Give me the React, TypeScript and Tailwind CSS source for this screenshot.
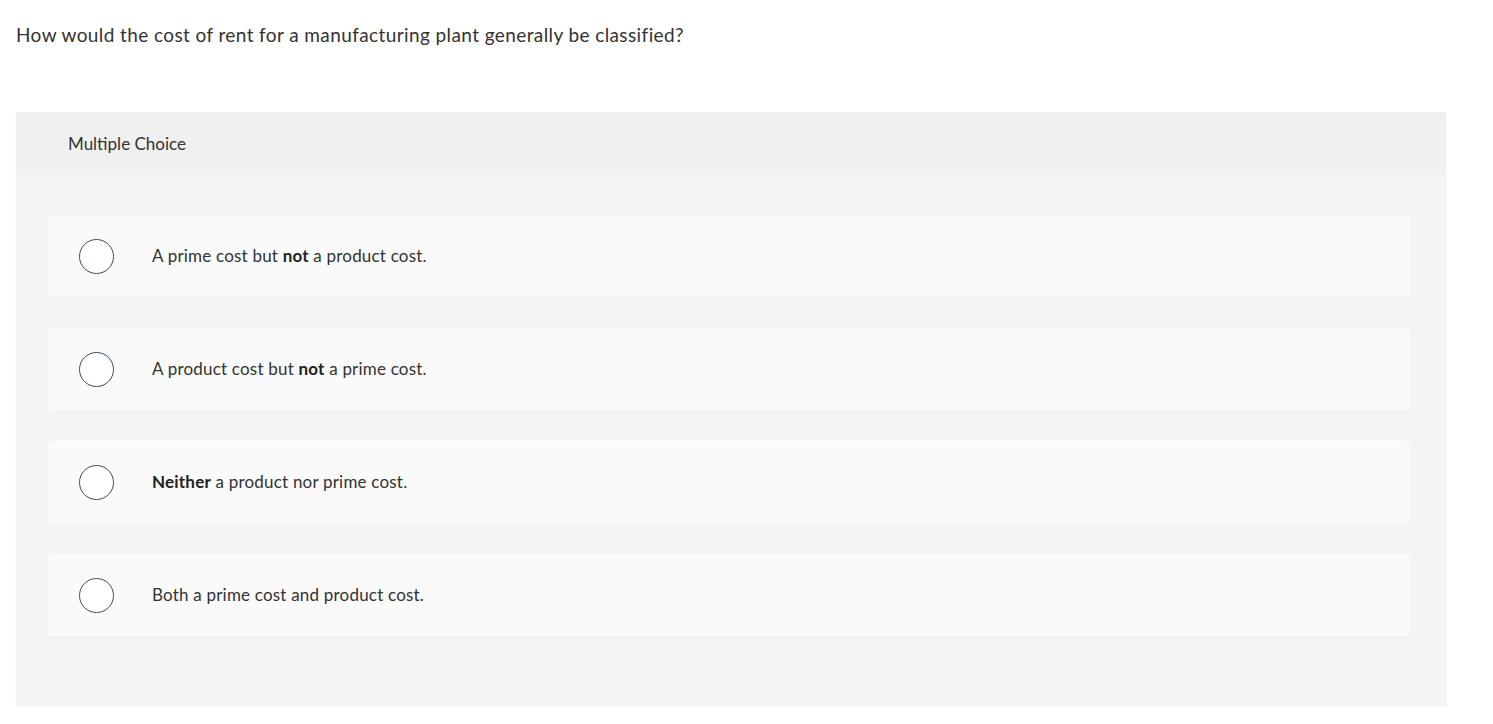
const options: { pre?: string; bold?: string; post: string }[] = [
  { pre: 'A prime cost but ', bold: 'not', post: ' a product cost.' },
  { pre: 'A product cost but ', bold: 'not', post: ' a prime cost.' },
  { bold: 'Neither', post: ' a product nor prime cost.' },
  { pre: 'Both a prime cost and product cost.', post: '' },
]

export default function App() {
  return (
    <div className="min-h-[724px] bg-white font-['Lato',sans-serif] text-[#333]">
      {/* Question */}
      <div className="px-4 pt-[22px]">
        <p className="text-[19px] leading-[26px] tracking-[0.4px] text-[#333]">
          How would the cost of rent for a manufacturing plant generally be classified?
        </p>
      </div>

      {/* Choices panel */}
      <div className="ml-4 mt-[64px] w-[1430px] bg-[#f4f4f4] shadow-[0_1px_2px_rgba(0,0,0,0.06)]">
        <div className="flex h-[63px] items-center bg-[#f0f0f0] px-[52px] text-[17px] text-[#333]">
          Multiple Choice
        </div>
        <div className="flex flex-col gap-[31px] pb-[69px] pl-8 pr-9 pt-10">
          {options.map((o, i) => (
            <div
              key={i}
              className="flex h-[82px] items-center rounded-sm bg-[#fafafa]"
            >
              <div className="ml-[31px] h-[35px] w-[35px] shrink-0 rounded-full border-[1.5px] border-[#3b4e5e] bg-white" />
              <div className="ml-[38px] text-[17px] tracking-[0.2px] text-[#333]">
                {o.pre}
                {o.bold && <b className="font-bold text-[#222]">{o.bold}</b>}
                {o.post}
              </div>
            </div>
          ))}
        </div>
      </div>
    </div>
  )
}
